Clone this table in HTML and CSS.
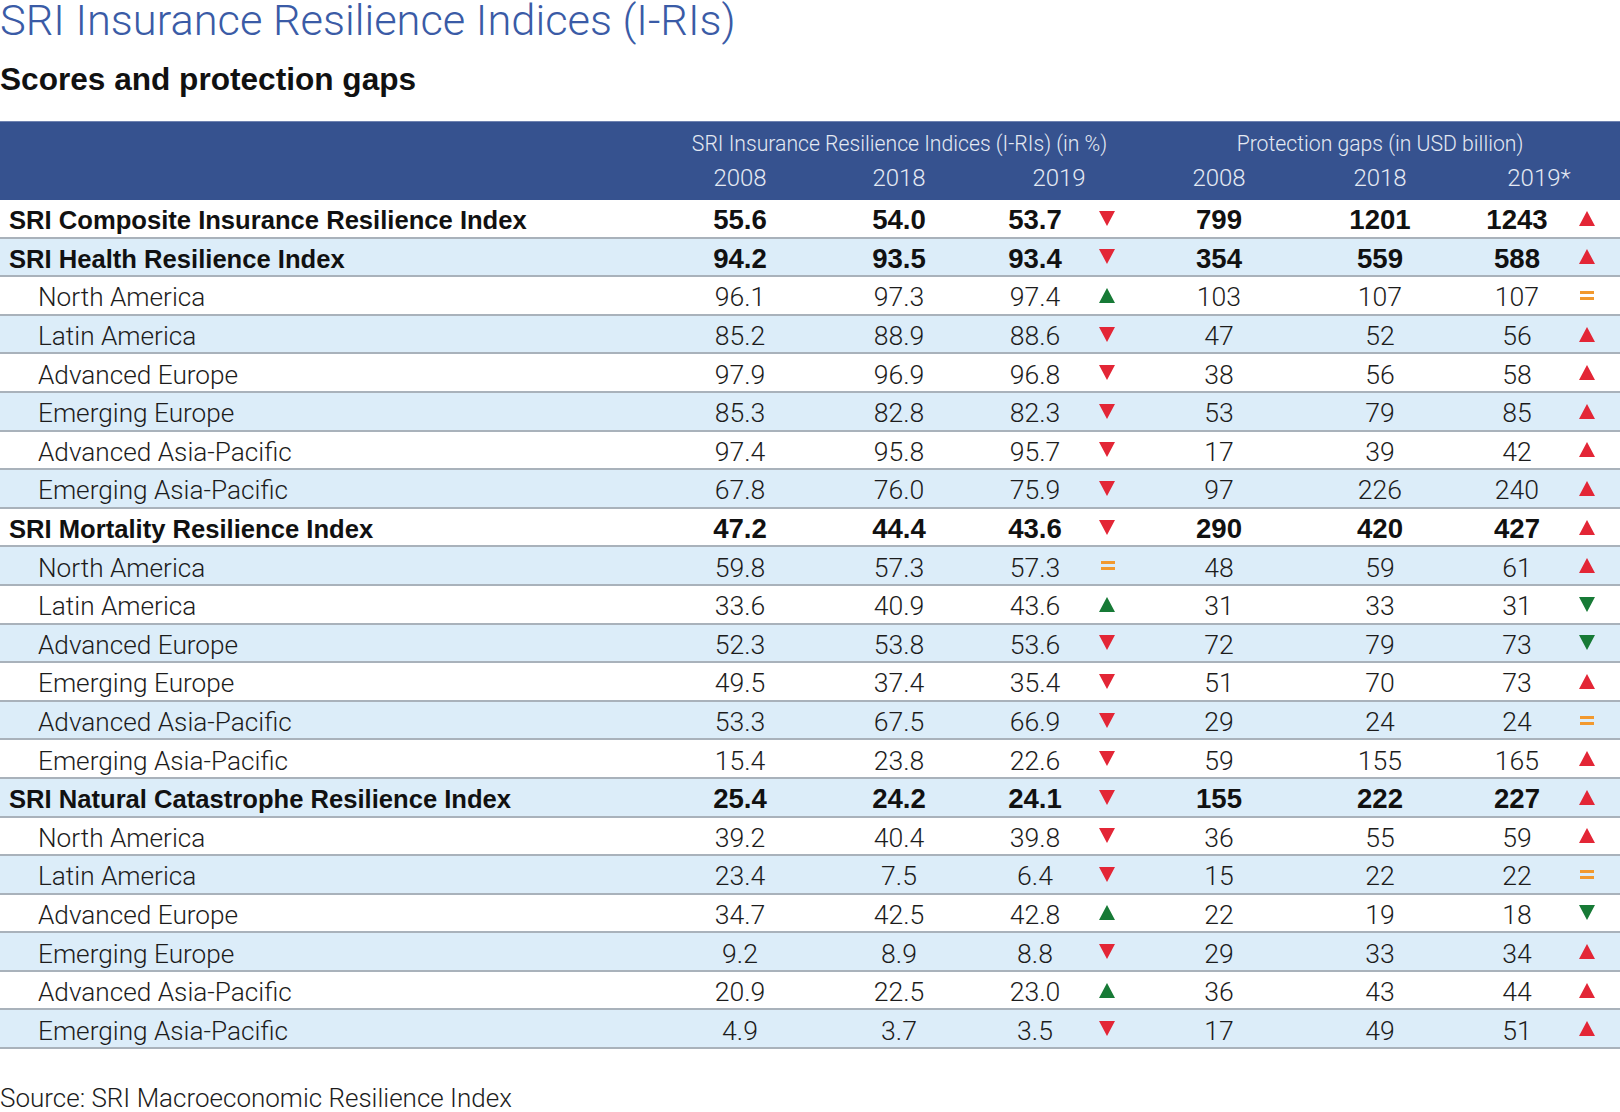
FILE: index.html
```html
<!DOCTYPE html>
<html lang="en">
<head>
<meta charset="utf-8">
<title>SRI Insurance Resilience Indices (I-RIs)</title>
<link rel="stylesheet" href="styles.css">
</head>
<body>
<main class="page">
  <h1 class="title">SRI Insurance Resilience Indices (I-RIs)</h1>
  <h2 class="subtitle">Scores and protection gaps</h2>

  <section class="table">
    <div class="thead">
      <div class="grid groups">
        <div class="c g1">SRI Insurance Resilience Indices (I-RIs) (in %)</div>
        <div class="c g2">Protection gaps (in USD billion)</div>
      </div>
      <div class="grid years">
        <div class="c y1">2008</div>
        <div class="c y2">2018</div>
        <div class="c y3">2019</div>
        <div class="c y4">2008</div>
        <div class="c y5">2018</div>
        <div class="c y6">2019*</div>
      </div>
    </div>

    <div class="grid row b"><div class="lbl">SRI Composite Insurance Resilience Index</div><div class="c">55.6</div><div class="c">54.0</div><div class="c">53.7</div><div class="ar"><i class="tri dn red"></i></div><div class="c">799</div><div class="c">1201</div><div class="c p3">1243</div><div class="ar a2"><i class="tri up red"></i></div></div>
    <div class="grid row b alt"><div class="lbl">SRI Health Resilience Index</div><div class="c">94.2</div><div class="c">93.5</div><div class="c">93.4</div><div class="ar"><i class="tri dn red"></i></div><div class="c">354</div><div class="c">559</div><div class="c p3">588</div><div class="ar a2"><i class="tri up red"></i></div></div>
    <div class="grid row"><div class="lbl">North America</div><div class="c">96.1</div><div class="c">97.3</div><div class="c">97.4</div><div class="ar"><i class="tri up green"></i></div><div class="c">103</div><div class="c">107</div><div class="c p3">107</div><div class="ar a2"><i class="eq"></i></div></div>
    <div class="grid row alt"><div class="lbl">Latin America</div><div class="c">85.2</div><div class="c">88.9</div><div class="c">88.6</div><div class="ar"><i class="tri dn red"></i></div><div class="c">47</div><div class="c">52</div><div class="c p3">56</div><div class="ar a2"><i class="tri up red"></i></div></div>
    <div class="grid row"><div class="lbl">Advanced Europe</div><div class="c">97.9</div><div class="c">96.9</div><div class="c">96.8</div><div class="ar"><i class="tri dn red"></i></div><div class="c">38</div><div class="c">56</div><div class="c p3">58</div><div class="ar a2"><i class="tri up red"></i></div></div>
    <div class="grid row alt"><div class="lbl">Emerging Europe</div><div class="c">85.3</div><div class="c">82.8</div><div class="c">82.3</div><div class="ar"><i class="tri dn red"></i></div><div class="c">53</div><div class="c">79</div><div class="c p3">85</div><div class="ar a2"><i class="tri up red"></i></div></div>
    <div class="grid row"><div class="lbl">Advanced Asia-Pacific</div><div class="c">97.4</div><div class="c">95.8</div><div class="c">95.7</div><div class="ar"><i class="tri dn red"></i></div><div class="c">17</div><div class="c">39</div><div class="c p3">42</div><div class="ar a2"><i class="tri up red"></i></div></div>
    <div class="grid row alt"><div class="lbl">Emerging Asia-Pacific</div><div class="c">67.8</div><div class="c">76.0</div><div class="c">75.9</div><div class="ar"><i class="tri dn red"></i></div><div class="c">97</div><div class="c">226</div><div class="c p3">240</div><div class="ar a2"><i class="tri up red"></i></div></div>

    <div class="grid row b"><div class="lbl">SRI Mortality Resilience Index</div><div class="c">47.2</div><div class="c">44.4</div><div class="c">43.6</div><div class="ar"><i class="tri dn red"></i></div><div class="c">290</div><div class="c">420</div><div class="c p3">427</div><div class="ar a2"><i class="tri up red"></i></div></div>
    <div class="grid row alt"><div class="lbl">North America</div><div class="c">59.8</div><div class="c">57.3</div><div class="c">57.3</div><div class="ar"><i class="eq"></i></div><div class="c">48</div><div class="c">59</div><div class="c p3">61</div><div class="ar a2"><i class="tri up red"></i></div></div>
    <div class="grid row"><div class="lbl">Latin America</div><div class="c">33.6</div><div class="c">40.9</div><div class="c">43.6</div><div class="ar"><i class="tri up green"></i></div><div class="c">31</div><div class="c">33</div><div class="c p3">31</div><div class="ar a2"><i class="tri dn green"></i></div></div>
    <div class="grid row alt"><div class="lbl">Advanced Europe</div><div class="c">52.3</div><div class="c">53.8</div><div class="c">53.6</div><div class="ar"><i class="tri dn red"></i></div><div class="c">72</div><div class="c">79</div><div class="c p3">73</div><div class="ar a2"><i class="tri dn green"></i></div></div>
    <div class="grid row"><div class="lbl">Emerging Europe</div><div class="c">49.5</div><div class="c">37.4</div><div class="c">35.4</div><div class="ar"><i class="tri dn red"></i></div><div class="c">51</div><div class="c">70</div><div class="c p3">73</div><div class="ar a2"><i class="tri up red"></i></div></div>
    <div class="grid row alt"><div class="lbl">Advanced Asia-Pacific</div><div class="c">53.3</div><div class="c">67.5</div><div class="c">66.9</div><div class="ar"><i class="tri dn red"></i></div><div class="c">29</div><div class="c">24</div><div class="c p3">24</div><div class="ar a2"><i class="eq"></i></div></div>
    <div class="grid row"><div class="lbl">Emerging Asia-Pacific</div><div class="c">15.4</div><div class="c">23.8</div><div class="c">22.6</div><div class="ar"><i class="tri dn red"></i></div><div class="c">59</div><div class="c">155</div><div class="c p3">165</div><div class="ar a2"><i class="tri up red"></i></div></div>

    <div class="grid row b alt"><div class="lbl">SRI Natural Catastrophe Resilience Index</div><div class="c">25.4</div><div class="c">24.2</div><div class="c">24.1</div><div class="ar"><i class="tri dn red"></i></div><div class="c">155</div><div class="c">222</div><div class="c p3">227</div><div class="ar a2"><i class="tri up red"></i></div></div>
    <div class="grid row"><div class="lbl">North America</div><div class="c">39.2</div><div class="c">40.4</div><div class="c">39.8</div><div class="ar"><i class="tri dn red"></i></div><div class="c">36</div><div class="c">55</div><div class="c p3">59</div><div class="ar a2"><i class="tri up red"></i></div></div>
    <div class="grid row alt"><div class="lbl">Latin America</div><div class="c">23.4</div><div class="c">7.5</div><div class="c">6.4</div><div class="ar"><i class="tri dn red"></i></div><div class="c">15</div><div class="c">22</div><div class="c p3">22</div><div class="ar a2"><i class="eq"></i></div></div>
    <div class="grid row"><div class="lbl">Advanced Europe</div><div class="c">34.7</div><div class="c">42.5</div><div class="c">42.8</div><div class="ar"><i class="tri up green"></i></div><div class="c">22</div><div class="c">19</div><div class="c p3">18</div><div class="ar a2"><i class="tri dn green"></i></div></div>
    <div class="grid row alt"><div class="lbl">Emerging Europe</div><div class="c">9.2</div><div class="c">8.9</div><div class="c">8.8</div><div class="ar"><i class="tri dn red"></i></div><div class="c">29</div><div class="c">33</div><div class="c p3">34</div><div class="ar a2"><i class="tri up red"></i></div></div>
    <div class="grid row"><div class="lbl">Advanced Asia-Pacific</div><div class="c">20.9</div><div class="c">22.5</div><div class="c">23.0</div><div class="ar"><i class="tri up green"></i></div><div class="c">36</div><div class="c">43</div><div class="c p3">44</div><div class="ar a2"><i class="tri up red"></i></div></div>
    <div class="grid row alt"><div class="lbl">Emerging Asia-Pacific</div><div class="c">4.9</div><div class="c">3.7</div><div class="c">3.5</div><div class="ar"><i class="tri dn red"></i></div><div class="c">17</div><div class="c">49</div><div class="c p3">51</div><div class="ar a2"><i class="tri up red"></i></div></div>
  </section>

  <p class="source">Source: SRI Macroeconomic Resilience Index</p>
</main>
</body>
</html>
```

FILE: styles.css
```css
* { box-sizing: border-box; }

html, body {
  margin: 0;
  padding: 0;
}

body {
  width: 1620px;
  height: 1112px;
  overflow: hidden;
  background: #ffffff;
  color: #1c1c1c;
  font-family: Roboto, "Liberation Sans", Arial, sans-serif;
  font-weight: 300;
}

.title {
  margin: 0;
  height: 41px;
  font-size: 43.4px;
  line-height: 41px;
  font-weight: 300;
  color: #3a5ba6;
  white-space: nowrap;
}

.subtitle {
  margin: 18px 0 0;
  font-family: "Liberation Sans", Arial, sans-serif;
  font-weight: 700;
  font-size: 31.6px;
  line-height: 40px;
  color: #111111;
}

.table {
  margin-top: 22px;
}

.grid {
  display: grid;
  grid-template-columns: 660px 160px 158px 114px 30px 194px 128px 132px 44px;
}

.thead {
  height: 79px;
  padding-top: 7px;
  background: #36528f;
  color: #e4e9f3;
  border-top: 1px solid #6f82b0;
}

.groups {
  font-size: 21.2px;
  line-height: 30px;
}

.years {
  margin-top: 4px;
  font-size: 24px;
  line-height: 30px;
}

.c {
  text-align: center;
  white-space: nowrap;
}

.g1 { grid-column: 2 / 6; padding-left: 17px; }
.g2 { grid-column: 6 / 10; padding-left: 18px; }
.y1 { grid-column: 2; }
.y2 { grid-column: 3; }
.y3 { grid-column: 4 / 6; padding-left: 18px; }
.y4 { grid-column: 6; }
.y5 { grid-column: 7; }
.y6 { grid-column: 8 / 10; padding-left: 14px; }

.row {
  height: 38.6px;
  align-items: center;
  padding-top: 4px;
  border-bottom: 2px solid #a9b2bb;
  font-size: 26.2px;
  line-height: 30px;
}

.row.alt {
  background: #dcedf9;
}

.lbl {
  padding-left: 38px;
  white-space: nowrap;
}

.row .c {
  font-size: 26.6px;
}

.row.b {
  font-family: "Liberation Sans", Arial, sans-serif;
  font-weight: 700;
  font-size: 25.6px;
  color: #111111;
}

.row.b .c {
  font-size: 27.6px;
}

.row.b .lbl {
  padding-left: 9px;
}

.p3 {
  padding-left: 14px;
}

.ar {
  display: flex;
  justify-content: center;
  align-items: center;
  height: 30px;
  padding-bottom: 4px;
}

.a2 {
  justify-content: flex-start;
  padding-left: 3px;
}

.tri {
  display: block;
  width: 0;
  height: 0;
  border-left: 8.5px solid transparent;
  border-right: 8.5px solid transparent;
}

.tri.dn.red { border-top: 15px solid #e32636; }
.tri.up.red { border-bottom: 15px solid #e32636; }
.tri.up.green { border-bottom: 15px solid #177a36; }
.tri.dn.green { border-top: 15px solid #177a36; }

.eq {
  display: block;
  width: 14px;
  height: 9px;
  margin-left: 1px;
  border-top: 3px solid #f2992e;
  border-bottom: 3px solid #f2992e;
}

.source {
  margin: 34px 0 0;
  font-size: 26px;
  line-height: 30px;
  white-space: nowrap;
}
```
